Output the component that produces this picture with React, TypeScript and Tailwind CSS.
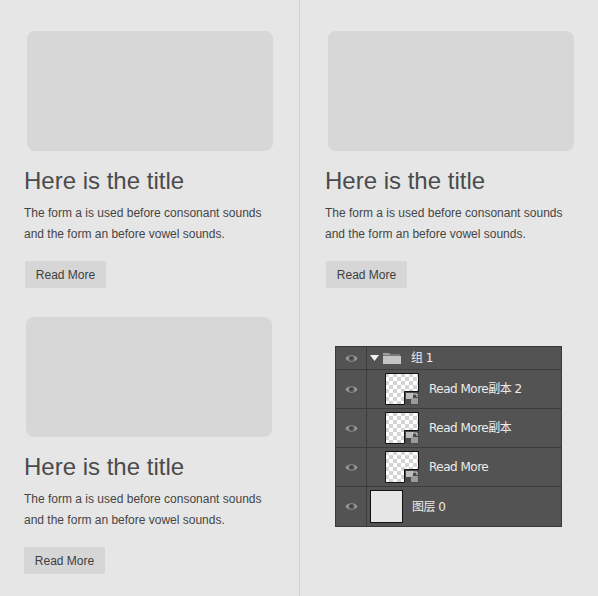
import React from 'react';

const font = { fontFamily: '"Liberation Sans", Arial, sans-serif' };

function Card({ imgOffset = 'ml-[3px]', btnOffset = 'ml-[1px]' }: { imgOffset?: string; btnOffset?: string }) {
  return (
    <div className="flex flex-col items-start">
      <div className={`${imgOffset} w-[246px] h-[120px] rounded-[8px] bg-[#d7d7d7]`} />
      <h2 className="mt-[16px] text-[24px] leading-[28px] text-[#4b4b4b]">Here is the title</h2>
      <p className="mt-[8px] text-[12px] leading-[21px] text-[#454545]">
        The form a is used before consonant sounds
        <br />
        and the form an before vowel sounds.
      </p>
      <button
        type="button"
        className={`${btnOffset} mt-[16px] w-[81px] h-[27px] rounded-[2px] bg-[#d6d6d6] text-[12px] text-[#3e3e3e]`}
      >
        Read More
      </button>
    </div>
  );
}

function Eye() {
  return (
    <svg width="13" height="9" viewBox="0 0 13 9">
      <path d="M0.5 4.5 C3 0.3 10 0.3 12.5 4.5 C10 8.7 3 8.7 0.5 4.5 Z" fill="#9a9a9a" />
      <ellipse cx="6.5" cy="4.5" rx="3" ry="2.7" fill="#5c5c5c" />
      <ellipse cx="6.5" cy="4.3" rx="1.3" ry="1.2" fill="#3a3a3a" />
    </svg>
  );
}

function SmartThumb({ id }: { id: string }) {
  return (
    <svg width="35" height="32" viewBox="0 0 35 32">
      <defs>
        <pattern id={id} width="8" height="8" patternUnits="userSpaceOnUse">
          <rect width="8" height="8" fill="#ffffff" />
          <rect width="4" height="4" fill="#d4d4d4" />
          <rect x="4" y="4" width="4" height="4" fill="#d4d4d4" />
        </pattern>
      </defs>
      <path d="M0.5 0.5 H33.5 V18.5 H19.5 V31.5 H0.5 Z" fill={`url(#${id})`} stroke="#111" strokeWidth="1" />
      <rect x="20" y="19" width="14" height="13" fill="#4a4a4a" />
      <rect x="21" y="20" width="7" height="6" fill="#bdbdbd" />
      <rect x="26" y="25" width="7" height="6" fill="#9a9a9a" />
      <path d="M27 21 H32 V24" stroke="#ddd" strokeWidth="1" fill="none" />
    </svg>
  );
}

function LayerRow({ children, tall = true }: { children: React.ReactNode; tall?: boolean }) {
  return (
    <div className={`flex ${tall ? 'h-[39px]' : 'h-[23px]'} border-b border-[#3c3c3c] last:border-b-0`}>
      <div className="w-[31px] flex items-center justify-center border-r border-[#3c3c3c]">
        <Eye />
      </div>
      <div className="flex-1 flex items-center">{children}</div>
    </div>
  );
}

function LayersPanel() {
  const label = 'text-[12px] text-[#ececec] leading-none';
  const labelFont = { fontFamily: '"DejaVu Sans", "Noto Sans CJK SC", sans-serif', letterSpacing: '-0.5px' };
  return (
    <div className="ml-[35px] mt-[58px] w-[227px] border border-[#3a3a3a] bg-[#535353]">
      <LayerRow tall={false}>
        <svg width="9" height="6" viewBox="0 0 9 6" className="ml-[3px]">
          <path d="M0 0 H9 L4.5 6 Z" fill="#f0f0f0" />
        </svg>
        <svg width="18" height="12" viewBox="0 0 18 12" className="ml-[4px]">
          <path d="M0 1 H6 L7.5 2.5 H17 V3.5 H0 Z" fill="#9e9e9e" />
          <rect x="0" y="4" width="18" height="8" fill="#c4c4c4" />
        </svg>
        <span className={`${label} ml-[10px]`} style={labelFont}>组 1</span>
      </LayerRow>
      <LayerRow>
        <div className="ml-[18px]"><SmartThumb id="c1" /></div>
        <span className={`${label} ml-[9px]`} style={labelFont}>Read More副本 2</span>
      </LayerRow>
      <LayerRow>
        <div className="ml-[18px]"><SmartThumb id="c2" /></div>
        <span className={`${label} ml-[9px]`} style={labelFont}>Read More副本</span>
      </LayerRow>
      <LayerRow>
        <div className="ml-[18px]"><SmartThumb id="c3" /></div>
        <span className={`${label} ml-[9px]`} style={labelFont}>Read More</span>
      </LayerRow>
      <LayerRow>
        <div className="ml-[3px] w-[33px] h-[33px] border border-[#111] bg-[#e6e6e6]" />
        <span className={`${label} ml-[9px]`} style={labelFont}>图层 0</span>
      </LayerRow>
    </div>
  );
}

export default function App() {
  return (
    <div className="w-[598px] h-[596px] bg-[#e6e6e6] flex overflow-hidden" style={font}>
      <div className="w-[299px] pl-[24px] pt-[31px] flex flex-col">
        <Card />
        <div className="mt-[29px]">
          <Card imgOffset="ml-[2px]" btnOffset="ml-0" />
        </div>
      </div>
      <div className="w-px bg-[#d3d3d3]" />
      <div className="flex-1 pt-[31px] flex flex-col">
        <div className="pl-[25px]">
          <Card />
        </div>
        <LayersPanel />
      </div>
    </div>
  );
}
